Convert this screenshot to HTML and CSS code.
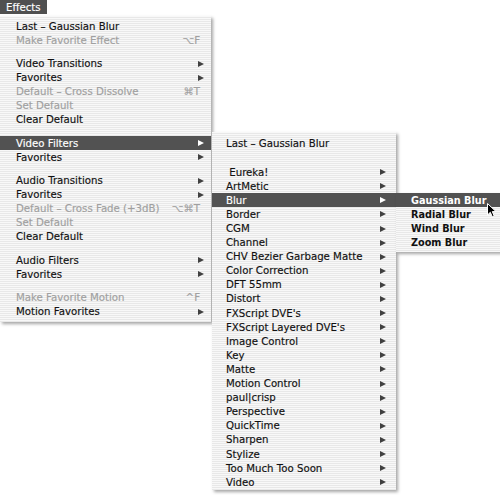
FILE: index.html
```html
<!DOCTYPE html>
<html>
<head>
<meta charset="utf-8">
<link rel="stylesheet" href="styles.css">
</head>
<body>
<div class="screen">
  <div class="menubar"><span class="title">Effects</span></div>

  <div class="menu menu-main">
    <div class="item">Last – Gaussian Blur</div>
    <div class="item off">Make Favorite Effect<span class="key">⌥F</span></div>
    <div class="sep"></div>
    <div class="item">Video Transitions<span class="arrow"></span></div>
    <div class="item">Favorites<span class="arrow"></span></div>
    <div class="item off">Default – Cross Dissolve<span class="key">⌘T</span></div>
    <div class="item off">Set Default</div>
    <div class="item">Clear Default</div>
    <div class="sep"></div>
    <div class="item on">Video Filters<span class="arrow"></span></div>
    <div class="item">Favorites<span class="arrow"></span></div>
    <div class="sep"></div>
    <div class="item">Audio Transitions<span class="arrow"></span></div>
    <div class="item">Favorites<span class="arrow"></span></div>
    <div class="item off">Default – Cross Fade (+3dB)<span class="key">⌥⌘T</span></div>
    <div class="item off">Set Default</div>
    <div class="item">Clear Default</div>
    <div class="sep"></div>
    <div class="item">Audio Filters<span class="arrow"></span></div>
    <div class="item">Favorites<span class="arrow"></span></div>
    <div class="sep"></div>
    <div class="item off">Make Favorite Motion<span class="key">^F</span></div>
    <div class="item">Motion Favorites<span class="arrow"></span></div>
  </div>

  <div class="menu menu-filters">
    <div class="item">Last – Gaussian Blur</div>
    <div class="sep sep-wide"></div>
    <div class="item">&nbsp;Eureka!<span class="arrow"></span></div>
    <div class="item">ArtMetic<span class="arrow"></span></div>
    <div class="item on">Blur<span class="arrow"></span></div>
    <div class="item">Border<span class="arrow"></span></div>
    <div class="item">CGM<span class="arrow"></span></div>
    <div class="item">Channel<span class="arrow"></span></div>
    <div class="item">CHV Bezier Garbage Matte<span class="arrow"></span></div>
    <div class="item">Color Correction<span class="arrow"></span></div>
    <div class="item">DFT 55mm<span class="arrow"></span></div>
    <div class="item">Distort<span class="arrow"></span></div>
    <div class="item">FXScript DVE's<span class="arrow"></span></div>
    <div class="item">FXScript Layered DVE's<span class="arrow"></span></div>
    <div class="item">Image Control<span class="arrow"></span></div>
    <div class="item">Key<span class="arrow"></span></div>
    <div class="item">Matte<span class="arrow"></span></div>
    <div class="item">Motion Control<span class="arrow"></span></div>
    <div class="item">paul|crisp<span class="arrow"></span></div>
    <div class="item">Perspective<span class="arrow"></span></div>
    <div class="item">QuickTime<span class="arrow"></span></div>
    <div class="item">Sharpen<span class="arrow"></span></div>
    <div class="item">Stylize<span class="arrow"></span></div>
    <div class="item">Too Much Too Soon<span class="arrow"></span></div>
    <div class="item">Video<span class="arrow"></span></div>
  </div>

  <div class="menu menu-blur">
    <div class="item on">Gaussian Blur</div>
    <div class="item">Radial Blur</div>
    <div class="item">Wind Blur</div>
    <div class="item">Zoom Blur</div>
  </div>

  <svg class="cursor" width="10" height="15" viewBox="0 0 10 15">
    <path d="M0.5 0.5 L0.5 12 L3.3 9.3 L5.3 13.8 L7.2 13 L5.3 8.6 L9 8.6 Z" fill="#000" stroke="#fff" stroke-width="1"/>
  </svg>
</div>
</body>
</html>
```

FILE: styles.css
```css
html, body {
  margin: 0;
  padding: 0;
  background: #fff;
}

.screen {
  position: relative;
  width: 500px;
  height: 495px;
  overflow: hidden;
  font-family: "DejaVu Sans", "Liberation Sans", sans-serif;
  font-size: 10.2px;
  color: #111;
  -webkit-text-stroke: 0.15px currentColor;
}

.menubar {
  display: flex;
  height: 15px;
}

.title {
  display: flex;
  align-items: center;
  height: 14px;
  padding: 0 6px;
  background: #505050;
  color: #fff;
}

.menu {
  position: absolute;
  background: repeating-linear-gradient(to bottom, #f8f8f8 0, #f8f8f8 1px, #e8e8e8 1px, #e8e8e8 2px);
  box-shadow: 2px 2px 3px rgba(0, 0, 0, 0.35);
}

.menu-main {
  left: 0;
  top: 16px;
  width: 211px;
  padding: 3px 0 3px;
}

.menu-filters {
  left: 212px;
  top: 132px;
  width: 184px;
  padding: 4px 0 1px;
}

.menu-blur {
  left: 396px;
  top: 193px;
  width: 130px;
  padding: 0 0 3px;
  font-weight: bold;
  font-size: 9.7px;
  -webkit-text-stroke: 0;
}

.item {
  display: flex;
  align-items: center;
  height: 14px;
  padding-left: 16px;
  white-space: nowrap;
}

.menu-filters .item {
  height: 14.1px;
  padding-left: 14px;
}

.menu-blur .item {
  padding-left: 15px;
}

.item.off {
  color: #a0a0a0;
}

.item.on {
  background: #525252;
  color: #fff;
}

.key {
  margin-left: auto;
  padding-right: 11px;
}

.arrow {
  margin-left: auto;
  margin-right: 7px;
  width: 0;
  height: 0;
  border-left: 6px solid #404040;
  border-top: 3.5px solid transparent;
  border-bottom: 3.5px solid transparent;
}

.menu-filters .arrow {
  margin-right: 10px;
}

.item.on .arrow {
  border-left-color: #fff;
}

.sep {
  height: 9.6px;
}

.sep-wide {
  height: 15px;
}

.cursor {
  position: absolute;
  left: 487px;
  top: 203px;
}
```
